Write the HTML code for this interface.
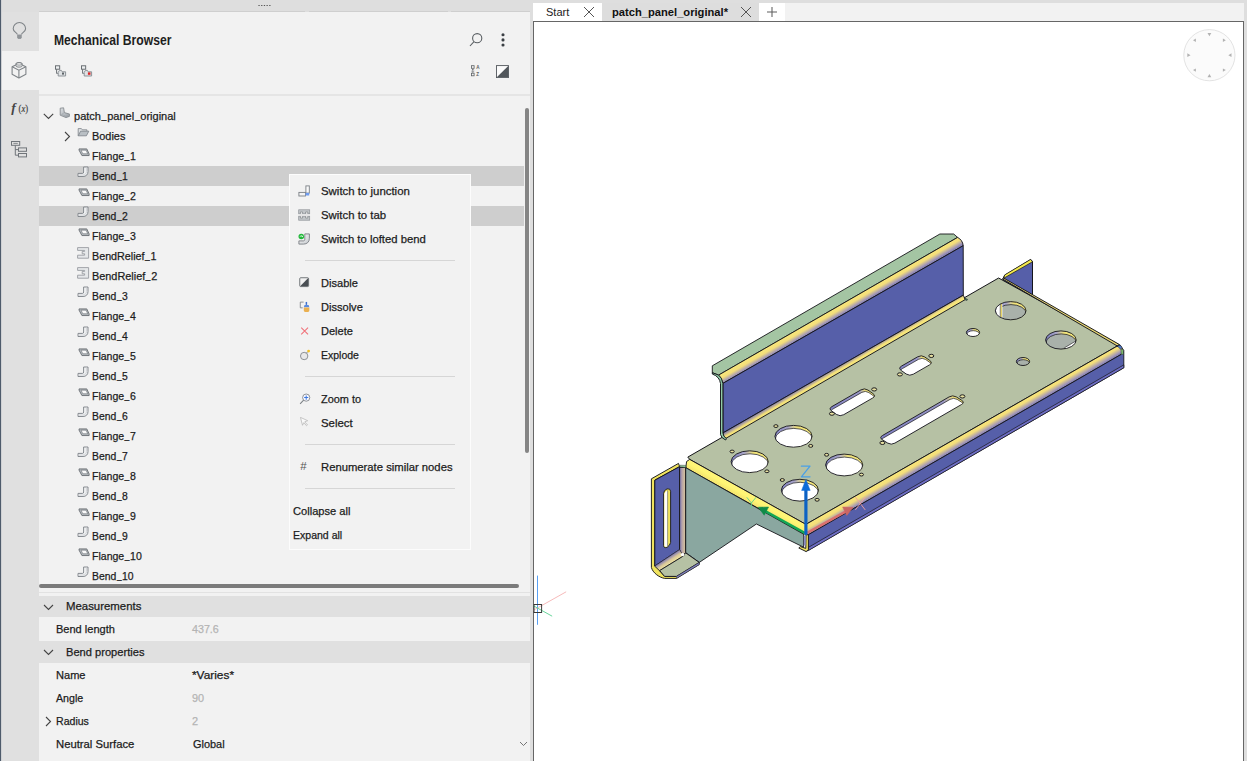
<!DOCTYPE html>
<html><head><meta charset="utf-8"><title>Mechanical Browser</title>
<style>
html,body{margin:0;padding:0;width:1247px;height:761px;overflow:hidden;background:#dedede;font-family:"Liberation Sans",sans-serif;}
.b{position:absolute;display:block;}
.u{display:inline-block;position:relative;top:-1.3px;transform:scaleX(0.8)}
.t{position:absolute;white-space:nowrap;line-height:16px;height:16px;transform-origin:0 50%;font-family:"Liberation Sans",sans-serif;}
</style></head><body>
<div class="b" style="left:0px;top:0px;width:1247px;height:761px;background:#dedede;"></div>
<div class="b" style="left:0px;top:0px;width:1px;height:761px;background:#4e5b6b;"></div>
<div class="b" style="left:1px;top:0px;width:1px;height:761px;background:#cfd1d4;"></div>
<div class="b" style="left:2px;top:12px;width:37px;height:749px;background:#e0e0e0;"></div>
<div class="b" style="left:2px;top:51.3px;width:37px;height:38.7px;background:#f2f2f2;"></div>
<div class="b" style="left:39px;top:12px;width:491px;height:749px;background:#f2f2f2;"></div>
<div class="b" style="left:39px;top:94.4px;width:491px;height:1.3px;background:#e5e5e5;"></div>
<svg class="b" style="left:258px;top:4px" width="14" height="4" viewBox="0 0 14 4"><rect x="0.4" y="1" width="1.3" height="1" fill="#555"/><rect x="3.1" y="1" width="1.3" height="1" fill="#555"/><rect x="5.800000000000001" y="1" width="1.3" height="1" fill="#555"/><rect x="8.500000000000002" y="1" width="1.3" height="1" fill="#555"/><rect x="11.200000000000001" y="1" width="1.3" height="1" fill="#555"/></svg>
<div class="b" style="left:39px;top:11px;width:266px;height:1px;background:#cfcfcf;"></div>
<div class="b" style="left:308.5px;top:11px;width:139px;height:1px;background:#cfcfcf;"></div>
<div class="b" style="left:451.4px;top:11px;width:78.6px;height:1px;background:#cfcfcf;"></div>
<svg class="b" style="left:10px;top:19px" width="20" height="24" viewBox="0 0 20 24"><path d="M7.3 15.5c-.3-1.9-4.1-2.7-4.1-5.8a6.2 6.2 0 0 1 12.4 0c0 3.1-3.8 3.9-4.1 5.8" fill="none" stroke="#7f8488" stroke-width="1.1"/><path d="M7.2 15.4h4.5v3.2l-.8 1.3H8l-.8-1.3z" fill="#969a9e"/><path d="M7.2 16.9h4.5M7.4 18.3h4.1" stroke="#84898d" stroke-width="0.6"/></svg>
<svg class="b" style="left:10px;top:60px" width="20" height="24" viewBox="0 0 20 24"><path d="M8.9 3.4 2.1 6.8v7.5l6.8 3.6 7-3.6V6.8z" fill="none" stroke="#7f8488" stroke-width="1.1" stroke-linejoin="round"/><path d="M2.1 6.8 8.9 10.2l7-3.4M8.9 10.2v7.7" fill="none" stroke="#7f8488" stroke-width="1.1"/><path d="M6 5.9V3.8c0-1.7 6.1-1.7 6.1 0v2.1c0 1.6-6.1 1.6-6.1 0z" fill="#f2f2f2" stroke="#7f8488" stroke-width="1"/><ellipse cx="9.05" cy="3.9" rx="3.05" ry="1.25" fill="none" stroke="#7f8488" stroke-width="0.8"/></svg>
<svg class="b" style="left:8px;top:98px" width="26" height="20" viewBox="0 0 26 20"><text x="3.2" y="14.2" font-family="Liberation Serif" font-style="italic" font-weight="bold" font-size="13.5" fill="#454545">f</text><text x="10.6" y="14.0" font-family="Liberation Serif" font-size="9.4" fill="#3c3c3c" stroke="#3c3c3c" stroke-width="0.15" textLength="9.6" lengthAdjust="spacingAndGlyphs">(<tspan font-style="italic">x</tspan>)</text></svg>
<svg class="b" style="left:11px;top:141px" width="18" height="20" viewBox="0 0 18 20"><rect x="0.5" y="0.5" width="8.2" height="3.8" fill="none" stroke="#70757a" stroke-width="1"/><path d="M2.4 2.4h4.4" stroke="#70757a" stroke-width="0.8"/><rect x="7.5" y="6.9" width="8" height="3.4" fill="none" stroke="#70757a" stroke-width="1"/><rect x="7.5" y="12.5" width="8" height="3.4" fill="none" stroke="#70757a" stroke-width="1"/><path d="M4.3 4.4v9.8h3.2M4.3 8.6h3.2" fill="none" stroke="#70757a" stroke-width="1"/></svg>
<div class="t" style="left:54px;top:32.70px;font-size:13.8px;font-weight:bold;color:#1e1e1e;transform:scaleX(0.880);">Mechanical Browser</div>
<svg class="b" style="left:468px;top:32px" width="16" height="16" viewBox="0 0 16 16"><circle cx="9.2" cy="6.2" r="4.6" fill="none" stroke="#5a5f63" stroke-width="1.1"/><path d="M6 9.6 2 14" stroke="#5a5f63" stroke-width="1.1"/></svg>
<svg class="b" style="left:499.5px;top:32px" width="6" height="16" viewBox="0 0 6 16"><circle cx="3" cy="2.8" r="1.55" fill="#3a3f44"/><circle cx="3" cy="7.8999999999999995" r="1.55" fill="#3a3f44"/><circle cx="3" cy="13.0" r="1.55" fill="#3a3f44"/></svg>
<svg class="b" style="left:54.6px;top:65px" width="13" height="12" viewBox="0 0 13 12"><rect x="0.5" y="0.8" width="4.2" height="3.4" fill="#eef0f1" stroke="#5d6368" stroke-width="0.9"/><path d="M1.6 4.4v4h1.2" fill="none" stroke="#5d6368" stroke-width="0.9"/><path d="M3.2 11V7.4l1.2-2h2l.8 1.4h3.4V11z" fill="#dfe2e4" stroke="#8d9398" stroke-width="1"/><rect x="7" y="7.6" width="2" height="2" fill="#5d6368"/></svg>
<svg class="b" style="left:80.6px;top:65px" width="13" height="12" viewBox="0 0 13 12"><rect x="0.5" y="0.8" width="4.2" height="3.4" fill="#eef0f1" stroke="#5d6368" stroke-width="0.9"/><path d="M1.6 4.4v4h1.2" fill="none" stroke="#5d6368" stroke-width="0.9"/><path d="M3.2 11V7.4l1.2-2h2l.8 1.4h3.4V11z" fill="#dfe2e4" stroke="#8d9398" stroke-width="1"/><rect x="6.9" y="7.4" width="2.6" height="2.4" fill="#e02424"/></svg>
<svg class="b" style="left:471px;top:65px" width="11" height="12" viewBox="0 0 11 12"><rect x="0.5" y="0.7" width="2.6" height="2.6" fill="none" stroke="#5a5f63" stroke-width="0.8"/><rect x="0.5" y="8.2" width="2.6" height="2.6" fill="none" stroke="#5a5f63" stroke-width="0.8"/><path d="M1.8 4.2v3M.8 5.2l1-1 1 1M.8 6.4l1 1 1-1" fill="none" stroke="#5a5f63" stroke-width="0.7"/><text x="5.2" y="3.9" font-family="Liberation Sans" font-size="4.6" fill="#5a5f63" font-weight="bold">A</text><text x="5.2" y="11" font-family="Liberation Sans" font-size="4.6" fill="#5a5f63" font-weight="bold">Z</text></svg>
<svg class="b" style="left:495px;top:64px" width="14" height="14" viewBox="0 0 14 14"><rect x="1.5" y="1.6" width="12" height="12" fill="#fbfbfb" stroke="#51565b" stroke-width="0.9"/><path d="M13.2 1.9v11.4H1.8z" fill="#51565b"/></svg>
<svg class="b" style="left:42.6px;top:113px" width="11" height="7" viewBox="0 0 11 7"><path d="M0.8 0.8l4.7 4.7L10.2 0.8" fill="none" stroke="#444" stroke-width="1.1"/></svg>
<svg class="b" style="left:59px;top:107px" width="12" height="12" viewBox="0 0 12 12"><defs><linearGradient id="rg" x1="0" y1="0" x2="1" y2="1"><stop offset="0" stop-color="#dde0e3"/><stop offset="1" stop-color="#9aa0a6"/></linearGradient></defs><path d="M1.2 1.2 L4.6 0.8 L5.4 5.6 L10.4 7 L10.4 9.4 L7 10.6 L1.2 8.2 Z" fill="url(#rg)" stroke="#7d8388" stroke-width="0.8" stroke-linejoin="round"/><path d="M5.4 5.6 L2.4 7.4 L7 9.2 L10.4 7 M7 9.2V10.6" fill="none" stroke="#9aa0a5" stroke-width="0.6"/></svg>
<div class="t" style="left:74px;top:108.20px;font-size:11.5px;font-weight:normal;color:#1c1c1c;transform:scaleX(0.959);-webkit-text-stroke:0.25px #1c1c1c;">patch<span class=u>_</span>panel<span class=u>_</span>original</div>
<svg class="b" style="left:63.6px;top:131.2px" width="7" height="11" viewBox="0 0 7 11"><path d="M1 1l4.5 4.5L1 10" fill="none" stroke="#444" stroke-width="1.1"/></svg>
<svg class="b" style="left:77px;top:127px" width="13" height="11" viewBox="0 0 13 11"><path d="M1.2 8.8V1.6h3.2l.9 1.2h4.6v1.4" fill="#dfe2e4" stroke="#7a8086" stroke-width="0.8" stroke-linejoin="round"/><path d="M1.2 8.8l2.4-4.6h8.2L9.4 8.8z" fill="#b9bfc4" stroke="#7a8086" stroke-width="0.8" stroke-linejoin="round"/></svg>
<div class="t" style="left:92px;top:128.20px;font-size:11.5px;font-weight:normal;color:#1c1c1c;transform:scaleX(0.950);-webkit-text-stroke:0.25px #1c1c1c;">Bodies</div>
<svg class="b" style="left:77.5px;top:148.20000000000002px" width="12" height="9" viewBox="0 0 13 10"><path d="M1 1h8.6l2.6 5.6v1.8H4.2L1 2.4z" fill="#b8bdc1" stroke="#5c6166" stroke-width="0.9" stroke-linejoin="round"/><path d="M3.2 2.4h5.6l1.8 4H5.2z" fill="#fafafa" stroke="#5c6166" stroke-width="0.6" stroke-linejoin="round"/></svg>
<div class="t" style="left:92px;top:148.20px;font-size:11.5px;font-weight:normal;color:#1c1c1c;transform:scaleX(0.915);-webkit-text-stroke:0.25px #1c1c1c;">Flange<span class=u>_</span>1</div>
<div class="b" style="left:39px;top:166px;width:484.6px;height:20px;background:#cecece;"></div>
<svg class="b" style="left:77px;top:166.2px" width="13" height="12" viewBox="0 0 13 12"><path d="M6.6 1h4.4v4.6c0 3-2 4.9-5 4.9H1V7.4h4.6c.8 0 1-.6 1-1.4z" fill="#f0f1f2" stroke="#7a8086" stroke-width="0.9" stroke-linejoin="round"/><path d="M9.4 1.6v4c0 2-1.2 3.4-3.4 3.4H1.6" fill="none" stroke="#c9cdd0" stroke-width="0.8"/></svg>
<div class="t" style="left:92px;top:168.20px;font-size:11.5px;font-weight:normal;color:#1c1c1c;transform:scaleX(0.900);-webkit-text-stroke:0.25px #1c1c1c;">Bend<span class=u>_</span>1</div>
<svg class="b" style="left:77.5px;top:188.20000000000002px" width="12" height="9" viewBox="0 0 13 10"><path d="M1 1h8.6l2.6 5.6v1.8H4.2L1 2.4z" fill="#b8bdc1" stroke="#5c6166" stroke-width="0.9" stroke-linejoin="round"/><path d="M3.2 2.4h5.6l1.8 4H5.2z" fill="#fafafa" stroke="#5c6166" stroke-width="0.6" stroke-linejoin="round"/></svg>
<div class="t" style="left:92px;top:188.20px;font-size:11.5px;font-weight:normal;color:#1c1c1c;transform:scaleX(0.915);-webkit-text-stroke:0.25px #1c1c1c;">Flange<span class=u>_</span>2</div>
<div class="b" style="left:39px;top:206px;width:484.6px;height:20px;background:#cecece;"></div>
<svg class="b" style="left:77px;top:206.2px" width="13" height="12" viewBox="0 0 13 12"><path d="M6.6 1h4.4v4.6c0 3-2 4.9-5 4.9H1V7.4h4.6c.8 0 1-.6 1-1.4z" fill="#f0f1f2" stroke="#7a8086" stroke-width="0.9" stroke-linejoin="round"/><path d="M9.4 1.6v4c0 2-1.2 3.4-3.4 3.4H1.6" fill="none" stroke="#c9cdd0" stroke-width="0.8"/></svg>
<div class="t" style="left:92px;top:208.20px;font-size:11.5px;font-weight:normal;color:#1c1c1c;transform:scaleX(0.900);-webkit-text-stroke:0.25px #1c1c1c;">Bend<span class=u>_</span>2</div>
<svg class="b" style="left:77.5px;top:228.20000000000002px" width="12" height="9" viewBox="0 0 13 10"><path d="M1 1h8.6l2.6 5.6v1.8H4.2L1 2.4z" fill="#b8bdc1" stroke="#5c6166" stroke-width="0.9" stroke-linejoin="round"/><path d="M3.2 2.4h5.6l1.8 4H5.2z" fill="#fafafa" stroke="#5c6166" stroke-width="0.6" stroke-linejoin="round"/></svg>
<div class="t" style="left:92px;top:228.20px;font-size:11.5px;font-weight:normal;color:#1c1c1c;transform:scaleX(0.915);-webkit-text-stroke:0.25px #1c1c1c;">Flange<span class=u>_</span>3</div>
<svg class="b" style="left:77.3px;top:246.79999999999998px" width="13" height="12" viewBox="0 0 13 12"><path d="M0.6 0.6H11.6V11.2H0.6V8.2H7.6V6.8H5.2V4.4H7.6V3.4H0.6Z" fill="#e6e8ea" stroke="#989ca1" stroke-width="0.9" stroke-linejoin="round"/></svg>
<div class="t" style="left:92px;top:248.20px;font-size:11.5px;font-weight:normal;color:#1c1c1c;transform:scaleX(0.934);-webkit-text-stroke:0.25px #1c1c1c;">BendRelief<span class=u>_</span>1</div>
<svg class="b" style="left:77.3px;top:266.8px" width="13" height="12" viewBox="0 0 13 12"><path d="M0.6 0.6H11.6V11.2H0.6V8.2H7.6V6.8H5.2V4.4H7.6V3.4H0.6Z" fill="#e6e8ea" stroke="#989ca1" stroke-width="0.9" stroke-linejoin="round"/></svg>
<div class="t" style="left:92px;top:268.20px;font-size:11.5px;font-weight:normal;color:#1c1c1c;transform:scaleX(0.946);-webkit-text-stroke:0.25px #1c1c1c;">BendRelief<span class=u>_</span>2</div>
<svg class="b" style="left:77px;top:286.2px" width="13" height="12" viewBox="0 0 13 12"><path d="M6.6 1h4.4v4.6c0 3-2 4.9-5 4.9H1V7.4h4.6c.8 0 1-.6 1-1.4z" fill="#f0f1f2" stroke="#7a8086" stroke-width="0.9" stroke-linejoin="round"/><path d="M9.4 1.6v4c0 2-1.2 3.4-3.4 3.4H1.6" fill="none" stroke="#c9cdd0" stroke-width="0.8"/></svg>
<div class="t" style="left:92px;top:288.20px;font-size:11.5px;font-weight:normal;color:#1c1c1c;transform:scaleX(0.900);-webkit-text-stroke:0.25px #1c1c1c;">Bend<span class=u>_</span>3</div>
<svg class="b" style="left:77.5px;top:308.2px" width="12" height="9" viewBox="0 0 13 10"><path d="M1 1h8.6l2.6 5.6v1.8H4.2L1 2.4z" fill="#b8bdc1" stroke="#5c6166" stroke-width="0.9" stroke-linejoin="round"/><path d="M3.2 2.4h5.6l1.8 4H5.2z" fill="#fafafa" stroke="#5c6166" stroke-width="0.6" stroke-linejoin="round"/></svg>
<div class="t" style="left:92px;top:308.20px;font-size:11.5px;font-weight:normal;color:#1c1c1c;transform:scaleX(0.915);-webkit-text-stroke:0.25px #1c1c1c;">Flange<span class=u>_</span>4</div>
<svg class="b" style="left:77px;top:326.2px" width="13" height="12" viewBox="0 0 13 12"><path d="M6.6 1h4.4v4.6c0 3-2 4.9-5 4.9H1V7.4h4.6c.8 0 1-.6 1-1.4z" fill="#f0f1f2" stroke="#7a8086" stroke-width="0.9" stroke-linejoin="round"/><path d="M9.4 1.6v4c0 2-1.2 3.4-3.4 3.4H1.6" fill="none" stroke="#c9cdd0" stroke-width="0.8"/></svg>
<div class="t" style="left:92px;top:328.20px;font-size:11.5px;font-weight:normal;color:#1c1c1c;transform:scaleX(0.900);-webkit-text-stroke:0.25px #1c1c1c;">Bend<span class=u>_</span>4</div>
<svg class="b" style="left:77.5px;top:348.2px" width="12" height="9" viewBox="0 0 13 10"><path d="M1 1h8.6l2.6 5.6v1.8H4.2L1 2.4z" fill="#b8bdc1" stroke="#5c6166" stroke-width="0.9" stroke-linejoin="round"/><path d="M3.2 2.4h5.6l1.8 4H5.2z" fill="#fafafa" stroke="#5c6166" stroke-width="0.6" stroke-linejoin="round"/></svg>
<div class="t" style="left:92px;top:348.20px;font-size:11.5px;font-weight:normal;color:#1c1c1c;transform:scaleX(0.915);-webkit-text-stroke:0.25px #1c1c1c;">Flange<span class=u>_</span>5</div>
<svg class="b" style="left:77px;top:366.2px" width="13" height="12" viewBox="0 0 13 12"><path d="M6.6 1h4.4v4.6c0 3-2 4.9-5 4.9H1V7.4h4.6c.8 0 1-.6 1-1.4z" fill="#f0f1f2" stroke="#7a8086" stroke-width="0.9" stroke-linejoin="round"/><path d="M9.4 1.6v4c0 2-1.2 3.4-3.4 3.4H1.6" fill="none" stroke="#c9cdd0" stroke-width="0.8"/></svg>
<div class="t" style="left:92px;top:368.20px;font-size:11.5px;font-weight:normal;color:#1c1c1c;transform:scaleX(0.900);-webkit-text-stroke:0.25px #1c1c1c;">Bend<span class=u>_</span>5</div>
<svg class="b" style="left:77.5px;top:388.2px" width="12" height="9" viewBox="0 0 13 10"><path d="M1 1h8.6l2.6 5.6v1.8H4.2L1 2.4z" fill="#b8bdc1" stroke="#5c6166" stroke-width="0.9" stroke-linejoin="round"/><path d="M3.2 2.4h5.6l1.8 4H5.2z" fill="#fafafa" stroke="#5c6166" stroke-width="0.6" stroke-linejoin="round"/></svg>
<div class="t" style="left:92px;top:388.20px;font-size:11.5px;font-weight:normal;color:#1c1c1c;transform:scaleX(0.915);-webkit-text-stroke:0.25px #1c1c1c;">Flange<span class=u>_</span>6</div>
<svg class="b" style="left:77px;top:406.2px" width="13" height="12" viewBox="0 0 13 12"><path d="M6.6 1h4.4v4.6c0 3-2 4.9-5 4.9H1V7.4h4.6c.8 0 1-.6 1-1.4z" fill="#f0f1f2" stroke="#7a8086" stroke-width="0.9" stroke-linejoin="round"/><path d="M9.4 1.6v4c0 2-1.2 3.4-3.4 3.4H1.6" fill="none" stroke="#c9cdd0" stroke-width="0.8"/></svg>
<div class="t" style="left:92px;top:408.20px;font-size:11.5px;font-weight:normal;color:#1c1c1c;transform:scaleX(0.900);-webkit-text-stroke:0.25px #1c1c1c;">Bend<span class=u>_</span>6</div>
<svg class="b" style="left:77.5px;top:428.2px" width="12" height="9" viewBox="0 0 13 10"><path d="M1 1h8.6l2.6 5.6v1.8H4.2L1 2.4z" fill="#b8bdc1" stroke="#5c6166" stroke-width="0.9" stroke-linejoin="round"/><path d="M3.2 2.4h5.6l1.8 4H5.2z" fill="#fafafa" stroke="#5c6166" stroke-width="0.6" stroke-linejoin="round"/></svg>
<div class="t" style="left:92px;top:428.20px;font-size:11.5px;font-weight:normal;color:#1c1c1c;transform:scaleX(0.915);-webkit-text-stroke:0.25px #1c1c1c;">Flange<span class=u>_</span>7</div>
<svg class="b" style="left:77px;top:446.2px" width="13" height="12" viewBox="0 0 13 12"><path d="M6.6 1h4.4v4.6c0 3-2 4.9-5 4.9H1V7.4h4.6c.8 0 1-.6 1-1.4z" fill="#f0f1f2" stroke="#7a8086" stroke-width="0.9" stroke-linejoin="round"/><path d="M9.4 1.6v4c0 2-1.2 3.4-3.4 3.4H1.6" fill="none" stroke="#c9cdd0" stroke-width="0.8"/></svg>
<div class="t" style="left:92px;top:448.20px;font-size:11.5px;font-weight:normal;color:#1c1c1c;transform:scaleX(0.900);-webkit-text-stroke:0.25px #1c1c1c;">Bend<span class=u>_</span>7</div>
<svg class="b" style="left:77.5px;top:468.2px" width="12" height="9" viewBox="0 0 13 10"><path d="M1 1h8.6l2.6 5.6v1.8H4.2L1 2.4z" fill="#b8bdc1" stroke="#5c6166" stroke-width="0.9" stroke-linejoin="round"/><path d="M3.2 2.4h5.6l1.8 4H5.2z" fill="#fafafa" stroke="#5c6166" stroke-width="0.6" stroke-linejoin="round"/></svg>
<div class="t" style="left:92px;top:468.20px;font-size:11.5px;font-weight:normal;color:#1c1c1c;transform:scaleX(0.915);-webkit-text-stroke:0.25px #1c1c1c;">Flange<span class=u>_</span>8</div>
<svg class="b" style="left:77px;top:486.2px" width="13" height="12" viewBox="0 0 13 12"><path d="M6.6 1h4.4v4.6c0 3-2 4.9-5 4.9H1V7.4h4.6c.8 0 1-.6 1-1.4z" fill="#f0f1f2" stroke="#7a8086" stroke-width="0.9" stroke-linejoin="round"/><path d="M9.4 1.6v4c0 2-1.2 3.4-3.4 3.4H1.6" fill="none" stroke="#c9cdd0" stroke-width="0.8"/></svg>
<div class="t" style="left:92px;top:488.20px;font-size:11.5px;font-weight:normal;color:#1c1c1c;transform:scaleX(0.900);-webkit-text-stroke:0.25px #1c1c1c;">Bend<span class=u>_</span>8</div>
<svg class="b" style="left:77.5px;top:508.2px" width="12" height="9" viewBox="0 0 13 10"><path d="M1 1h8.6l2.6 5.6v1.8H4.2L1 2.4z" fill="#b8bdc1" stroke="#5c6166" stroke-width="0.9" stroke-linejoin="round"/><path d="M3.2 2.4h5.6l1.8 4H5.2z" fill="#fafafa" stroke="#5c6166" stroke-width="0.6" stroke-linejoin="round"/></svg>
<div class="t" style="left:92px;top:508.20px;font-size:11.5px;font-weight:normal;color:#1c1c1c;transform:scaleX(0.915);-webkit-text-stroke:0.25px #1c1c1c;">Flange<span class=u>_</span>9</div>
<svg class="b" style="left:77px;top:526.2px" width="13" height="12" viewBox="0 0 13 12"><path d="M6.6 1h4.4v4.6c0 3-2 4.9-5 4.9H1V7.4h4.6c.8 0 1-.6 1-1.4z" fill="#f0f1f2" stroke="#7a8086" stroke-width="0.9" stroke-linejoin="round"/><path d="M9.4 1.6v4c0 2-1.2 3.4-3.4 3.4H1.6" fill="none" stroke="#c9cdd0" stroke-width="0.8"/></svg>
<div class="t" style="left:92px;top:528.20px;font-size:11.5px;font-weight:normal;color:#1c1c1c;transform:scaleX(0.900);-webkit-text-stroke:0.25px #1c1c1c;">Bend<span class=u>_</span>9</div>
<svg class="b" style="left:77.5px;top:548.1999999999999px" width="12" height="9" viewBox="0 0 13 10"><path d="M1 1h8.6l2.6 5.6v1.8H4.2L1 2.4z" fill="#b8bdc1" stroke="#5c6166" stroke-width="0.9" stroke-linejoin="round"/><path d="M3.2 2.4h5.6l1.8 4H5.2z" fill="#fafafa" stroke="#5c6166" stroke-width="0.6" stroke-linejoin="round"/></svg>
<div class="t" style="left:92px;top:548.20px;font-size:11.5px;font-weight:normal;color:#1c1c1c;transform:scaleX(0.916);-webkit-text-stroke:0.25px #1c1c1c;">Flange<span class=u>_</span>10</div>
<svg class="b" style="left:77px;top:566.2px" width="13" height="12" viewBox="0 0 13 12"><path d="M6.6 1h4.4v4.6c0 3-2 4.9-5 4.9H1V7.4h4.6c.8 0 1-.6 1-1.4z" fill="#f0f1f2" stroke="#7a8086" stroke-width="0.9" stroke-linejoin="round"/><path d="M9.4 1.6v4c0 2-1.2 3.4-3.4 3.4H1.6" fill="none" stroke="#c9cdd0" stroke-width="0.8"/></svg>
<div class="t" style="left:92px;top:568.20px;font-size:11.5px;font-weight:normal;color:#1c1c1c;transform:scaleX(0.903);-webkit-text-stroke:0.25px #1c1c1c;">Bend<span class=u>_</span>10</div>
<div class="b" style="left:39px;top:583px;width:491px;height:11px;background:#f2f2f2;"></div>
<div class="b" style="left:39px;top:584px;width:480px;height:4px;background:#7b7b7b;border-radius:2px"></div>
<div class="b" style="left:39px;top:591.6px;width:491px;height:1px;background:#e2e2e2;"></div>
<div class="b" style="left:524.7px;top:107.5px;width:4.6px;height:345.5px;background:#858585;border-radius:2.3px"></div>
<div class="b" style="left:39px;top:595.8px;width:491px;height:21.2px;background:#e0e0e0;"></div>
<svg class="b" style="left:42.6px;top:603.6px" width="11" height="7" viewBox="0 0 11 7"><path d="M1 1l4.5 4.5L10 1" fill="none" stroke="#444" stroke-width="1.1"/></svg>
<div class="t" style="left:66px;top:598.40px;font-size:11.5px;font-weight:normal;color:#1c1c1c;transform:scaleX(0.991);-webkit-text-stroke:0.25px #1c1c1c;">Measurements</div>
<div class="t" style="left:56px;top:620.70px;font-size:11.5px;font-weight:normal;color:#1c1c1c;transform:scaleX(0.959);-webkit-text-stroke:0.25px #1c1c1c;">Bend length</div>
<div class="t" style="left:192px;top:620.70px;font-size:11.5px;font-weight:normal;color:#b4b4b4;transform:scaleX(0.931);-webkit-text-stroke:0.25px #b4b4b4;">437.6</div>
<div class="b" style="left:39px;top:641.4px;width:491px;height:21.4px;background:#e0e0e0;"></div>
<svg class="b" style="left:42.6px;top:649.4px" width="11" height="7" viewBox="0 0 11 7"><path d="M1 1l4.5 4.5L10 1" fill="none" stroke="#444" stroke-width="1.1"/></svg>
<div class="t" style="left:66px;top:644.00px;font-size:11.5px;font-weight:normal;color:#1c1c1c;transform:scaleX(0.966);-webkit-text-stroke:0.25px #1c1c1c;">Bend properties</div>
<div class="t" style="left:56px;top:666.70px;font-size:11.5px;font-weight:normal;color:#1c1c1c;transform:scaleX(0.962);-webkit-text-stroke:0.25px #1c1c1c;">Name</div>
<div class="t" style="left:192px;top:666.70px;font-size:11.5px;font-weight:normal;color:#1c1c1c;transform:scaleX(1.032);-webkit-text-stroke:0.25px #1c1c1c;">*Varies*</div>
<div class="t" style="left:56px;top:689.70px;font-size:11.5px;font-weight:normal;color:#1c1c1c;transform:scaleX(0.928);-webkit-text-stroke:0.25px #1c1c1c;">Angle</div>
<div class="t" style="left:192px;top:689.70px;font-size:11.5px;font-weight:normal;color:#b4b4b4;transform:scaleX(0.946);-webkit-text-stroke:0.25px #b4b4b4;">90</div>
<svg class="b" style="left:45px;top:716px" width="7" height="11" viewBox="0 0 7 11"><path d="M1 1l4.5 4.5L1 10" fill="none" stroke="#444" stroke-width="1.1"/></svg>
<div class="t" style="left:56px;top:712.70px;font-size:11.5px;font-weight:normal;color:#1c1c1c;transform:scaleX(0.919);-webkit-text-stroke:0.25px #1c1c1c;">Radius</div>
<div class="t" style="left:192px;top:712.70px;font-size:11.5px;font-weight:normal;color:#b4b4b4;transform:scaleX(0.954);-webkit-text-stroke:0.25px #b4b4b4;">2</div>
<div class="t" style="left:56px;top:735.70px;font-size:11.5px;font-weight:normal;color:#1c1c1c;transform:scaleX(0.981);-webkit-text-stroke:0.25px #1c1c1c;">Neutral Surface</div>
<div class="t" style="left:193px;top:735.70px;font-size:11.5px;font-weight:normal;color:#1c1c1c;transform:scaleX(0.951);-webkit-text-stroke:0.25px #1c1c1c;">Global</div>
<svg class="b" style="left:519px;top:741px" width="9" height="6" viewBox="0 0 9 6"><path d="M1 1l3.5 3.5L8 1" fill="none" stroke="#666" stroke-width="0.9"/></svg>
<div class="b" style="left:290px;top:175px;width:180px;height:374px;background:#f2f2f2;box-shadow:0 0 0 1px #fcfcfc"></div>
<svg class="b" style="left:298.4px;top:184.5px" width="13" height="13" viewBox="0 0 13 13"><rect x="7.9" y="0.9" width="3.4" height="7.2" fill="#fafafa" stroke="#7a7f84" stroke-width="0.9"/><rect x="0.9" y="7.4" width="6.6" height="3.6" fill="#f4f4f4" stroke="#7a7f84" stroke-width="0.9"/><rect x="7.6" y="7.9" width="3.6" height="2.6" fill="#6f9cf0"/></svg>
<div class="t" style="left:321px;top:183.20px;font-size:11.5px;font-weight:normal;color:#1c1c1c;transform:scaleX(0.993);-webkit-text-stroke:0.25px #1c1c1c;">Switch to junction</div>
<svg class="b" style="left:298.4px;top:208.5px" width="13" height="13" viewBox="0 0 13 13"><rect x="0.7" y="0.8" width="11" height="4" fill="#c2c6c9" stroke="#8d9297" stroke-width="0.7"/><rect x="0.7" y="7.2" width="11" height="4" fill="#c2c6c9" stroke="#8d9297" stroke-width="0.7"/><path d="M2.4 4.8V3h2.2v1.8M7.6 4.8V3h2.2v1.8M2.4 7.2V9h2.2V7.2M7.6 7.2V9h2.2V7.2" fill="#f6f6f6" stroke="#6d7277" stroke-width="0.6"/></svg>
<div class="t" style="left:321px;top:207.20px;font-size:11.5px;font-weight:normal;color:#1c1c1c;transform:scaleX(0.990);-webkit-text-stroke:0.25px #1c1c1c;">Switch to tab</div>
<svg class="b" style="left:298.4px;top:232.5px" width="13" height="13" viewBox="0 0 13 13"><defs><linearGradient id="lg1" x1="0" y1="0" x2="1" y2="1"><stop offset="0" stop-color="#f6f6f6"/><stop offset="1" stop-color="#c8ccd0"/></linearGradient></defs><path d="M6.8 0.9h4.6v4.4c0 3.6-2.4 5.8-5.8 5.8H0.9V7.9h4.4c1 0 1.5-.7 1.5-1.8z" fill="url(#lg1)" stroke="#7a7f84" stroke-width="0.9" stroke-linejoin="round"/><circle cx="3.3" cy="3.5" r="2.8" fill="#22b83a"/><path d="M2.1 3.9c0-1.6 2.4-1.6 2.4-.2M4.5 3.7l.5-1M4.5 3.7l-1-.3" stroke="#fff" stroke-width="0.7" fill="none"/></svg>
<div class="t" style="left:321px;top:231.20px;font-size:11.5px;font-weight:normal;color:#1c1c1c;transform:scaleX(0.981);-webkit-text-stroke:0.25px #1c1c1c;">Switch to lofted bend</div>
<div class="b" style="left:305px;top:260px;width:150px;height:1px;background:#d6d6d6;"></div>
<svg class="b" style="left:299.0px;top:277.40000000000003px" width="12" height="12" viewBox="0 0 13 13"><rect x="0.8" y="0.8" width="9.6" height="9.6" rx="1" fill="#f2f2f2" stroke="#5a5f63" stroke-width="0.9"/><path d="M10 1.2v8.8H1.2z" fill="#4a4f54"/></svg>
<div class="t" style="left:321px;top:275.20px;font-size:11.5px;font-weight:normal;color:#1c1c1c;transform:scaleX(0.962);-webkit-text-stroke:0.25px #1c1c1c;">Disable</div>
<svg class="b" style="left:298.6px;top:300.6px" width="12" height="12" viewBox="0 0 13 13"><path d="M5 1.2H1.4v6.2H4" fill="none" stroke="#7a7f84" stroke-width="0.9"/><path d="M8 1v3.2" stroke="#3a6fd0" stroke-width="1.6"/><path d="M6 4.4h4.4l.8 2.4H5.2z" fill="#5a8ae0"/><path d="M5.2 7h6v3.2c0 1-1 1.8-3 1.8s-3-.8-3-1.8z" fill="#eab050"/></svg>
<div class="t" style="left:321px;top:299.20px;font-size:11.5px;font-weight:normal;color:#1c1c1c;transform:scaleX(0.962);-webkit-text-stroke:0.25px #1c1c1c;">Dissolve</div>
<svg class="b" style="left:298.6px;top:324.6px" width="12" height="12" viewBox="0 0 13 13"><path d="M2.4 2.8l7.4 7.4M9.8 2.8l-7.4 7.4" stroke="#f07078" stroke-width="1.1"/></svg>
<div class="t" style="left:321px;top:323.20px;font-size:11.5px;font-weight:normal;color:#1c1c1c;transform:scaleX(0.960);-webkit-text-stroke:0.25px #1c1c1c;">Delete</div>
<svg class="b" style="left:298.6px;top:348.6px" width="12" height="12" viewBox="0 0 13 13"><circle cx="5.6" cy="7.6" r="4" fill="#e8e8e8" stroke="#7a7f84" stroke-width="0.9"/><path d="M8 4.6l1.8-2" stroke="#7a7f84" stroke-width="0.9"/><circle cx="10.4" cy="2.2" r="1.5" fill="#f4c020"/></svg>
<div class="t" style="left:321px;top:347.20px;font-size:11.5px;font-weight:normal;color:#1c1c1c;transform:scaleX(0.912);-webkit-text-stroke:0.25px #1c1c1c;">Explode</div>
<div class="b" style="left:305px;top:376px;width:150px;height:1px;background:#d6d6d6;"></div>
<svg class="b" style="left:298.6px;top:392.6px" width="12" height="12" viewBox="0 0 13 13"><circle cx="7.8" cy="5" r="3.9" fill="#f8f8ff" stroke="#7a7f84" stroke-width="0.9"/><path d="M5 7.8 1.2 11.8" stroke="#7a7f84" stroke-width="1.1"/><path d="M7.8 2.8v4.4M5.6 5h4.4" stroke="#3a78e0" stroke-width="1.1"/></svg>
<div class="t" style="left:321px;top:391.20px;font-size:11.5px;font-weight:normal;color:#1c1c1c;transform:scaleX(0.948);-webkit-text-stroke:0.25px #1c1c1c;">Zoom to</div>
<svg class="b" style="left:298.6px;top:416.6px" width="12" height="12" viewBox="0 0 13 13"><path d="M1.6 0.4l7.8 3.6-3.2 1.2 3 3.4-1 .9-3-3.4-1.4 2.9z" fill="#fafafa" stroke="#b4b4b4" stroke-width="0.8" stroke-linejoin="round"/></svg>
<div class="t" style="left:321px;top:415.20px;font-size:11.5px;font-weight:normal;color:#1c1c1c;transform:scaleX(0.989);-webkit-text-stroke:0.25px #1c1c1c;">Select</div>
<div class="b" style="left:305px;top:444px;width:150px;height:1px;background:#d6d6d6;"></div>
<div class="t" style="left:300.20000000000005px;top:457.6px;font-size:11.5px;color:#555">#</div>
<div class="t" style="left:321px;top:459.20px;font-size:11.5px;font-weight:normal;color:#1c1c1c;transform:scaleX(0.980);-webkit-text-stroke:0.25px #1c1c1c;">Renumerate similar nodes</div>
<div class="b" style="left:305px;top:488px;width:150px;height:1px;background:#d6d6d6;"></div>
<div class="t" style="left:293px;top:503.20px;font-size:11.5px;font-weight:normal;color:#1c1c1c;transform:scaleX(0.966);-webkit-text-stroke:0.25px #1c1c1c;">Collapse all</div>
<div class="t" style="left:293px;top:527.20px;font-size:11.5px;font-weight:normal;color:#1c1c1c;transform:scaleX(0.916);-webkit-text-stroke:0.25px #1c1c1c;">Expand all</div>
<div class="b" style="left:533px;top:3px;width:711px;height:18px;background:#f2f2f2;"></div>
<div class="b" style="left:533px;top:3px;width:69px;height:18px;background:#ffffff;"></div>
<div class="b" style="left:602px;top:3px;width:157.4px;height:18px;background:#dddddd;"></div>
<div class="b" style="left:759.4px;top:3px;width:25.6px;height:18px;background:#ffffff;"></div>
<div class="t" style="left:546px;top:3.50px;font-size:11px;font-weight:normal;color:#222;transform:scaleX(1.000);">Start</div>
<svg class="b" style="left:583.4px;top:6px" width="12" height="12" viewBox="0 0 12 12"><path d="M1 1l10 10M11 1L1 11" stroke="#555" stroke-width="1"/></svg>
<div class="t" style="left:612px;top:3.50px;font-size:11px;font-weight:bold;color:#111;transform:scaleX(1.015);">patch_panel_original*</div>
<svg class="b" style="left:740px;top:6px" width="12" height="12" viewBox="0 0 12 12"><path d="M1 1l10 10M11 1L1 11" stroke="#555" stroke-width="1"/></svg>
<svg class="b" style="left:766px;top:6px" width="12" height="12" viewBox="0 0 12 12"><path d="M6 1v10M1 6h10" stroke="#5e5e5e" stroke-width="1.05"/></svg>
<div class="b" style="left:533px;top:21px;width:711px;height:740px;background:#ffffff;box-shadow:inset 1px 1px 0 #666, inset -1px 0 0 #666"></div>
<svg class="b" style="left:0;top:0" width="1247" height="761" viewBox="0 0 1247 761"><defs><linearGradient id="g1" gradientUnits="userSpaceOnUse" x1="718.6" y1="375.1" x2="723.3" y2="383.2"><stop offset="0" stop-color="#f8e87c"/><stop offset="0.45" stop-color="#f4de7a"/><stop offset="0.85" stop-color="#a79bb4"/><stop offset="1" stop-color="#8a84b4"/></linearGradient><linearGradient id="g2" gradientUnits="userSpaceOnUse" x1="723.0" y1="432.9" x2="726.1" y2="438.2"><stop offset="0" stop-color="#6a6cae"/><stop offset="0.35" stop-color="#b5a79a"/><stop offset="0.7" stop-color="#f3e07a"/><stop offset="1" stop-color="#f7e87c"/></linearGradient><clipPath id="c3"><ellipse cx="793.5" cy="436.3" rx="18.6" ry="10.9"/></clipPath><linearGradient id="g4" gradientUnits="userSpaceOnUse" x1="774.9" y1="436.3" x2="812.1" y2="436.3"><stop offset="0" stop-color="#7d7fc0"/><stop offset="0.35" stop-color="#a9a6c8"/><stop offset="0.6" stop-color="#f1e37a"/><stop offset="1" stop-color="#f5e97c"/></linearGradient><clipPath id="c5"><ellipse cx="749.7" cy="461.7" rx="18.6" ry="10.9"/></clipPath><linearGradient id="g6" gradientUnits="userSpaceOnUse" x1="731.1" y1="461.7" x2="768.3" y2="461.7"><stop offset="0" stop-color="#7d7fc0"/><stop offset="0.35" stop-color="#a9a6c8"/><stop offset="0.6" stop-color="#f1e37a"/><stop offset="1" stop-color="#f5e97c"/></linearGradient><clipPath id="c7"><ellipse cx="844.2" cy="465.0" rx="18.6" ry="10.9"/></clipPath><linearGradient id="g8" gradientUnits="userSpaceOnUse" x1="825.6" y1="465.0" x2="862.8" y2="465.0"><stop offset="0" stop-color="#7d7fc0"/><stop offset="0.35" stop-color="#a9a6c8"/><stop offset="0.6" stop-color="#f1e37a"/><stop offset="1" stop-color="#f5e97c"/></linearGradient><clipPath id="c9"><ellipse cx="799.9" cy="490.2" rx="18.6" ry="10.9"/></clipPath><linearGradient id="g10" gradientUnits="userSpaceOnUse" x1="781.3" y1="490.2" x2="818.5" y2="490.2"><stop offset="0" stop-color="#7d7fc0"/><stop offset="0.35" stop-color="#a9a6c8"/><stop offset="0.6" stop-color="#f1e37a"/><stop offset="1" stop-color="#f5e97c"/></linearGradient><clipPath id="c11"><ellipse cx="1010.7" cy="310.7" rx="15.3" ry="9.1"/></clipPath><linearGradient id="g12" gradientUnits="userSpaceOnUse" x1="995.4" y1="310.7" x2="1026.0" y2="310.7"><stop offset="0" stop-color="#7d7fc0"/><stop offset="0.35" stop-color="#a9a6c8"/><stop offset="0.6" stop-color="#f1e37a"/><stop offset="1" stop-color="#f5e97c"/></linearGradient><clipPath id="c13"><ellipse cx="1060.9" cy="340.0" rx="15.3" ry="9.1"/></clipPath><linearGradient id="g14" gradientUnits="userSpaceOnUse" x1="1045.6" y1="340.0" x2="1076.2" y2="340.0"><stop offset="0" stop-color="#7d7fc0"/><stop offset="0.35" stop-color="#a9a6c8"/><stop offset="0.6" stop-color="#f1e37a"/><stop offset="1" stop-color="#f5e97c"/></linearGradient><clipPath id="c15"><ellipse cx="973.0" cy="332.5" rx="6.6" ry="4.0"/></clipPath><linearGradient id="g16" gradientUnits="userSpaceOnUse" x1="966.4" y1="332.5" x2="979.6" y2="332.5"><stop offset="0" stop-color="#7d7fc0"/><stop offset="0.35" stop-color="#a9a6c8"/><stop offset="0.6" stop-color="#f1e37a"/><stop offset="1" stop-color="#f5e97c"/></linearGradient><clipPath id="c17"><ellipse cx="1023.0" cy="361.5" rx="6.6" ry="4.0"/></clipPath><linearGradient id="g18" gradientUnits="userSpaceOnUse" x1="1016.4" y1="361.5" x2="1029.6" y2="361.5"><stop offset="0" stop-color="#7d7fc0"/><stop offset="0.35" stop-color="#a9a6c8"/><stop offset="0.6" stop-color="#f1e37a"/><stop offset="1" stop-color="#f5e97c"/></linearGradient><clipPath id="c19"><path d="M901.4,370.6 Q897.9,368.2 901.5,366.1 L917.7,356.8 Q921.3,354.7 924.8,357.0 L929.6,360.4 Q933.1,362.8 929.5,364.9 L913.3,374.2 Q909.7,376.3 906.2,374.0 Z"/></clipPath><linearGradient id="g20" gradientUnits="userSpaceOnUse" x1="897.9" y1="368.2" x2="933.1" y2="362.8"><stop offset="0" stop-color="#7f80c2"/><stop offset="0.5878409460188379" stop-color="#9a98c6"/><stop offset="0.7078409460188378" stop-color="#efe07a"/><stop offset="1" stop-color="#f5e97c"/></linearGradient><clipPath id="c21"><path d="M831.8,411.1 Q828.3,408.7 831.9,406.6 L860.9,389.9 Q864.5,387.8 868.0,390.1 L872.8,393.5 Q876.3,395.9 872.7,398.0 L843.7,414.7 Q840.1,416.8 836.6,414.5 Z"/></clipPath><linearGradient id="g22" gradientUnits="userSpaceOnUse" x1="828.3" y1="408.7" x2="876.3" y2="395.9"><stop offset="0" stop-color="#7f80c2"/><stop offset="0.6930089526332286" stop-color="#9a98c6"/><stop offset="0.8130089526332286" stop-color="#efe07a"/><stop offset="1" stop-color="#f5e97c"/></linearGradient><clipPath id="c23"><path d="M882.5,439.8 Q878.9,437.6 882.5,435.5 L949.1,396.9 Q952.7,394.8 956.3,396.9 L961.5,400.2 Q965.1,402.4 961.5,404.5 L894.9,443.1 Q891.3,445.2 887.7,443.1 Z"/></clipPath><linearGradient id="g24" gradientUnits="userSpaceOnUse" x1="878.9" y1="437.6" x2="965.1" y2="402.4"><stop offset="0" stop-color="#7f80c2"/><stop offset="0.787718578770095" stop-color="#9a98c6"/><stop offset="0.907718578770095" stop-color="#efe07a"/><stop offset="1" stop-color="#f5e97c"/></linearGradient><linearGradient id="g25" gradientUnits="userSpaceOnUse" x1="689.7" y1="459.4" x2="686.0" y2="466.0"><stop offset="0" stop-color="#fdf27a"/><stop offset="0.5" stop-color="#fff674"/><stop offset="1" stop-color="#f6e870"/></linearGradient><linearGradient id="g26" gradientUnits="userSpaceOnUse" x1="805.9" y1="524.4" x2="811.0" y2="533.2"><stop offset="0" stop-color="#f8e87c"/><stop offset="0.42" stop-color="#f4de7a"/><stop offset="0.82" stop-color="#a79bb4"/><stop offset="1" stop-color="#8580b4"/></linearGradient><linearGradient id="g27" gradientUnits="userSpaceOnUse" x1="679.6" y1="0.0" x2="685.6" y2="0.0"><stop offset="0" stop-color="#7d78b4"/><stop offset="0.45" stop-color="#b9a6a6"/><stop offset="1" stop-color="#d9c79a"/></linearGradient><linearGradient id="g28" gradientUnits="userSpaceOnUse" x1="654.8" y1="566.0" x2="658.6" y2="571.8"><stop offset="0" stop-color="#7d78b4"/><stop offset="0.5" stop-color="#d9c79a"/><stop offset="1" stop-color="#f1e6a0"/></linearGradient></defs>
<polygon points="1002.8,279.2 1004.6,275.2 1030.6,259.6 1032.5,261.2 1032.5,296.0 1004.0,281.0" fill="#565fa9" stroke="#15151a" stroke-width="1.0" stroke-linejoin="round" />
<polygon points="1003.8,278.2 1004.6,275.0 1030.6,259.4 1032.5,261.8" fill="#f4ea4e" stroke="#15151a" stroke-width="0.7" stroke-linejoin="round" />
<polygon points="687.8,457.1 998.6,278.0 1120.4,345.6 1116.1,346.7 805.9,524.4 689.7,459.4" fill="#b6c1a4" stroke="#15151a" stroke-width="1.0" stroke-linejoin="round" />
<polygon points="1002.6,279.0 1003.6,278.0 1119.5,344.6 1117.0,345.8" fill="#e9d873" stroke="#15151a" stroke-width="0.95" stroke-linejoin="round" />
<path d="M712.3,365.8 L939.9,234.0 L953.7,234.0 L957.6,237.4 L718.6,375.1 L712.3,372.7 Z" fill="#a4c5a3" stroke="#15151a" stroke-width="0.9" stroke-linejoin="round"/>
<path d="M718.6,375.1 L957.6,237.4 Q962.6,240.0 963.2,245.7 L722.9,383.4 Q721.6,378.0 718.6,375.1 Z" fill="url(#g1)" stroke="#15151a" stroke-width="0.95"/>
<polygon points="722.9,383.4 963.2,245.7 963.3,295.2 723.0,432.9" fill="#565fa9" stroke="#15151a" stroke-width="0.95" stroke-linejoin="round" />
<polygon points="723.0,432.9 963.3,295.2 965.2,299.6 725.8,438.4 723.4,436.0" fill="url(#g2)" stroke="#15151a" stroke-width="0.95" stroke-linejoin="round" />
<path d="M712.3,372.7 L712.3,374.0 Q719.6,376.6 720.5,383.5 L720.5,434.6 Q721.4,438.2 725.6,440.0 L726.4,438.6 Q723.2,436.6 722.9,432.9 L722.9,383.4 Q722.0,377.4 718.6,375.1 Z" fill="#8fcaa6" stroke="#15151a" stroke-width="0.95" stroke-linejoin="round"/>
<polygon points="964.6,298.0 967.6,299.4 967.0,300.4 965.0,299.8" fill="#4f8f7a" stroke="#15151a" stroke-width="0.5" stroke-linejoin="round" />
<ellipse cx="793.5" cy="436.3" rx="18.6" ry="10.9" fill="url(#g4)"/><g clip-path="url(#c3)"><ellipse cx="793.8" cy="439.3" rx="18.6" ry="10.9" fill="#ffffff" stroke="#15151a" stroke-width="0.7"/></g><ellipse cx="793.5" cy="436.3" rx="18.6" ry="10.9" fill="none" stroke="#15151a" stroke-width="0.9"/>
<ellipse cx="775.9" cy="426.1" rx="2.1" ry="1.4" fill="#e8e1a0" stroke="#15151a" stroke-width="0.95"/>
<ellipse cx="810.7" cy="445.9" rx="2.1" ry="1.4" fill="#e8e1a0" stroke="#15151a" stroke-width="0.95"/>
<ellipse cx="749.7" cy="461.7" rx="18.6" ry="10.9" fill="url(#g6)"/><g clip-path="url(#c5)"><ellipse cx="750.0" cy="464.7" rx="18.6" ry="10.9" fill="#ffffff" stroke="#15151a" stroke-width="0.7"/></g><ellipse cx="749.7" cy="461.7" rx="18.6" ry="10.9" fill="none" stroke="#15151a" stroke-width="0.9"/>
<ellipse cx="732.1" cy="451.5" rx="2.1" ry="1.4" fill="#e8e1a0" stroke="#15151a" stroke-width="0.95"/>
<ellipse cx="766.9" cy="471.3" rx="2.1" ry="1.4" fill="#e8e1a0" stroke="#15151a" stroke-width="0.95"/>
<ellipse cx="844.2" cy="465.0" rx="18.6" ry="10.9" fill="url(#g8)"/><g clip-path="url(#c7)"><ellipse cx="844.5" cy="468.0" rx="18.6" ry="10.9" fill="#ffffff" stroke="#15151a" stroke-width="0.7"/></g><ellipse cx="844.2" cy="465.0" rx="18.6" ry="10.9" fill="none" stroke="#15151a" stroke-width="0.9"/>
<ellipse cx="826.6" cy="454.8" rx="2.1" ry="1.4" fill="#e8e1a0" stroke="#15151a" stroke-width="0.95"/>
<ellipse cx="861.4" cy="474.6" rx="2.1" ry="1.4" fill="#e8e1a0" stroke="#15151a" stroke-width="0.95"/>
<ellipse cx="799.9" cy="490.2" rx="18.6" ry="10.9" fill="url(#g10)"/><g clip-path="url(#c9)"><ellipse cx="800.1999999999999" cy="493.2" rx="18.6" ry="10.9" fill="#ffffff" stroke="#15151a" stroke-width="0.7"/></g><ellipse cx="799.9" cy="490.2" rx="18.6" ry="10.9" fill="none" stroke="#15151a" stroke-width="0.9"/>
<ellipse cx="782.3" cy="480.0" rx="2.1" ry="1.4" fill="#e8e1a0" stroke="#15151a" stroke-width="0.95"/>
<ellipse cx="817.1" cy="499.8" rx="2.1" ry="1.4" fill="#e8e1a0" stroke="#15151a" stroke-width="0.95"/>
<ellipse cx="1010.7" cy="310.7" rx="15.3" ry="9.1" fill="url(#g12)"/><g clip-path="url(#c11)"><ellipse cx="1011.0" cy="313.7" rx="15.3" ry="9.1" fill="#a9b1aa" stroke="#15151a" stroke-width="0.7"/><path d="M996,300 L1002.4,300 L1002.4,322 L996,322Z" fill="#fff"/><path d="M1001.2,300.5v16.5" stroke="#e8d66a" stroke-width="1.6"/><path d="M1000.2,300.5v16.5" stroke="#15151a" stroke-width="0.5"/></g><ellipse cx="1010.7" cy="310.7" rx="15.3" ry="9.1" fill="none" stroke="#15151a" stroke-width="0.9"/>
<ellipse cx="1060.9" cy="340.0" rx="15.3" ry="9.1" fill="url(#g14)"/><g clip-path="url(#c13)"><ellipse cx="1061.2" cy="343.0" rx="15.3" ry="9.1" fill="#a9b1aa" stroke="#15151a" stroke-width="0.7"/><path d="M1064.3,347.9 L1075.0,341.5 L1082,346 L1070,354 Z" fill="#fff" stroke="#15151a" stroke-width="0.6"/></g><ellipse cx="1060.9" cy="340.0" rx="15.3" ry="9.1" fill="none" stroke="#15151a" stroke-width="0.9"/>
<ellipse cx="973.0" cy="332.5" rx="6.6" ry="4.0" fill="url(#g16)"/><g clip-path="url(#c15)"><ellipse cx="973.3" cy="334.7" rx="6.6" ry="4.0" fill="#ffffff" stroke="#15151a" stroke-width="0.7"/></g><ellipse cx="973.0" cy="332.5" rx="6.6" ry="4.0" fill="none" stroke="#15151a" stroke-width="0.9"/>
<ellipse cx="1023.0" cy="361.5" rx="6.6" ry="4.0" fill="url(#g18)"/><g clip-path="url(#c17)"><ellipse cx="1023.3" cy="363.7" rx="6.6" ry="4.0" fill="#a9b1aa" stroke="#15151a" stroke-width="0.7"/></g><ellipse cx="1023.0" cy="361.5" rx="6.6" ry="4.0" fill="none" stroke="#15151a" stroke-width="0.9"/>
<path d="M901.4,370.6 Q897.9,368.2 901.5,366.1 L917.7,356.8 Q921.3,354.7 924.8,357.0 L929.6,360.4 Q933.1,362.8 929.5,364.9 L913.3,374.2 Q909.7,376.3 906.2,374.0 Z" fill="url(#g20)"/><g clip-path="url(#c19)"><path d="M901.4,370.6 Q897.9,368.2 901.5,366.1 L917.7,356.8 Q921.3,354.7 924.8,357.0 L929.6,360.4 Q933.1,362.8 929.5,364.9 L913.3,374.2 Q909.7,376.3 906.2,374.0 Z" transform="translate(0.9,2.5)" fill="#fff" stroke="#15151a" stroke-width="0.7"/></g><path d="M901.4,370.6 Q897.9,368.2 901.5,366.1 L917.7,356.8 Q921.3,354.7 924.8,357.0 L929.6,360.4 Q933.1,362.8 929.5,364.9 L913.3,374.2 Q909.7,376.3 906.2,374.0 Z" fill="none" stroke="#15151a" stroke-width="0.9"/>
<ellipse cx="931.3" cy="355.9" rx="2.5" ry="1.6" fill="#e8e1a0" stroke="#15151a" stroke-width="0.95"/>
<ellipse cx="899.9" cy="374.4" rx="2.5" ry="1.6" fill="#e8e1a0" stroke="#15151a" stroke-width="0.95"/>
<path d="M831.8,411.1 Q828.3,408.7 831.9,406.6 L860.9,389.9 Q864.5,387.8 868.0,390.1 L872.8,393.5 Q876.3,395.9 872.7,398.0 L843.7,414.7 Q840.1,416.8 836.6,414.5 Z" fill="url(#g22)"/><g clip-path="url(#c21)"><path d="M831.8,411.1 Q828.3,408.7 831.9,406.6 L860.9,389.9 Q864.5,387.8 868.0,390.1 L872.8,393.5 Q876.3,395.9 872.7,398.0 L843.7,414.7 Q840.1,416.8 836.6,414.5 Z" transform="translate(0.9,2.5)" fill="#fff" stroke="#15151a" stroke-width="0.7"/></g><path d="M831.8,411.1 Q828.3,408.7 831.9,406.6 L860.9,389.9 Q864.5,387.8 868.0,390.1 L872.8,393.5 Q876.3,395.9 872.7,398.0 L843.7,414.7 Q840.1,416.8 836.6,414.5 Z" fill="none" stroke="#15151a" stroke-width="0.9"/>
<ellipse cx="874.2" cy="389.4" rx="2.5" ry="1.6" fill="#e8e1a0" stroke="#15151a" stroke-width="0.95"/>
<ellipse cx="831.9" cy="413.7" rx="2.5" ry="1.6" fill="#e8e1a0" stroke="#15151a" stroke-width="0.95"/>
<path d="M882.5,439.8 Q878.9,437.6 882.5,435.5 L949.1,396.9 Q952.7,394.8 956.3,396.9 L961.5,400.2 Q965.1,402.4 961.5,404.5 L894.9,443.1 Q891.3,445.2 887.7,443.1 Z" fill="url(#g24)"/><g clip-path="url(#c23)"><path d="M882.5,439.8 Q878.9,437.6 882.5,435.5 L949.1,396.9 Q952.7,394.8 956.3,396.9 L961.5,400.2 Q965.1,402.4 961.5,404.5 L894.9,443.1 Q891.3,445.2 887.7,443.1 Z" transform="translate(0.9,2.5)" fill="#fff" stroke="#15151a" stroke-width="0.7"/></g><path d="M882.5,439.8 Q878.9,437.6 882.5,435.5 L949.1,396.9 Q952.7,394.8 956.3,396.9 L961.5,400.2 Q965.1,402.4 961.5,404.5 L894.9,443.1 Q891.3,445.2 887.7,443.1 Z" fill="none" stroke="#15151a" stroke-width="0.9"/>
<ellipse cx="962.4" cy="396.4" rx="2.5" ry="1.6" fill="#e8e1a0" stroke="#15151a" stroke-width="0.95"/>
<ellipse cx="882.4" cy="442.9" rx="2.5" ry="1.6" fill="#e8e1a0" stroke="#15151a" stroke-width="0.95"/>
<polygon points="689.7,459.4 805.9,524.4 805.9,533.9 803.9,533.9 686.0,467.8 686.0,466.0 686.6,461.5" fill="url(#g25)" stroke="#15151a" stroke-width="0.95" stroke-linejoin="round" />
<polygon points="685.6,467.6 803.6,534.2 803.6,547.2 756.4,524.0 699.3,562.4 685.6,552.6" fill="#8aa7a0" stroke="#15151a" stroke-width="0.9" stroke-linejoin="round" />
<polygon points="805.9,524.4 1116.1,346.7 1120.6,345.8 1123.8,350.6 1121.0,354.5 808.2,534.8 805.9,533.9" fill="url(#g26)" stroke="#15151a" stroke-width="0.95" stroke-linejoin="round" />
<polygon points="808.2,534.8 1121.0,354.5 1123.8,351.5 1123.8,367.8 806.4,551.4 808.2,549.0" fill="#565fa9" stroke="#15151a" stroke-width="0.9" stroke-linejoin="round" />
<polygon points="808.4,547.4 1123.8,364.9 1123.8,367.8 808.6,550.4" fill="#6e6ec4" stroke="#15151a" stroke-width="0.7" stroke-linejoin="round" />
<polygon points="806.0,534.6 808.4,534.8 808.4,549.4 806.2,551.6 798.8,548.0 800.4,546.6 805.8,548.4" fill="#efe465" stroke="#15151a" stroke-width="0.95" stroke-linejoin="round" />
<polygon points="803.8,535.5 805.6,535.5 805.6,545.5 803.8,545.5" fill="#8c8cc4" stroke="none" stroke-width="0" stroke-linejoin="round" />
<polygon points="1117.0,345.8 1120.4,345.2 1122.0,347.6 1120.6,349.2" fill="#4e78c8" stroke="#15151a" stroke-width="0.5" stroke-linejoin="round" />
<polygon points="1121.0,349.0 1123.2,349.6 1123.4,354.2 1121.2,354.4" fill="#86c878" stroke="#15151a" stroke-width="0.4" stroke-linejoin="round" />
<path d="M651.4,478.8 L678.5,463.4 L679.6,466.6 L654.8,480.2 L654.8,566.2 L659.7,570.8 L664.7,576.3 L676.4,576.4 L699.2,562.4 L699.2,564.6 L676.6,578.4 L664.6,578.4 C659,577.4 652.6,572.6 651.4,567.4 Z" fill="#f0e35e" stroke="#15151a" stroke-width="0.95" stroke-linejoin="round"/>
<polygon points="654.8,480.2 679.6,466.6 679.6,549.6 654.8,566.0" fill="#565fa9" stroke="#15151a" stroke-width="0.95" stroke-linejoin="round" />
<path d="M663.6,493.4 Q663.8,490.2 667,488.9 Q670.4,488.2 670.6,491.2 L670.6,542.4 Q670.2,545.2 667.2,547.2 Q663.8,548.6 663.6,545.6 Z" fill="#f0e35e" stroke="#15151a" stroke-width="0.9"/>
<path d="M664.4,494.6 Q664.6,491.6 667.6,490.6 L667.6,546.2 Q664.6,547.6 664.4,545.2 Z" fill="#fff"/>
<path d="M667.6,490.4 L667.6,546.4" stroke="#15151a" stroke-width="0.4"/>
<polygon points="679.6,467.4 685.6,467.4 685.6,552.4 682.6,556.2 679.6,549.6" fill="url(#g27)" stroke="#15151a" stroke-width="0.95" stroke-linejoin="round" />
<polygon points="679.6,466.6 680.2,465.2 685.6,465.4 685.6,467.6" fill="#8fce9c" stroke="#15151a" stroke-width="0.4" stroke-linejoin="round" />
<polygon points="654.8,566.0 679.6,549.6 683.4,556.0 659.6,570.6" fill="url(#g28)" stroke="#15151a" stroke-width="0.5" stroke-linejoin="round" />
<polygon points="659.6,570.6 683.4,556.0 685.6,552.8 699.2,562.4 676.4,576.4 664.6,576.4" fill="#b6c1a4" stroke="#15151a" stroke-width="0.95" stroke-linejoin="round" />
<polygon points="676.6,578.2 699.2,564.4 699.2,562.6 676.4,576.6" fill="#8a8cd0" stroke="#15151a" stroke-width="0.4" stroke-linejoin="round" />
<ellipse cx="682.6" cy="554.6" rx="1.8" ry="1.6" fill="#fff"/>
<polyline points="805.9,533.6 762.5,509.6" fill="none" stroke="#14a656" stroke-width="2.6" stroke-linejoin="round" stroke-linecap="round" />
<polygon points="758.2,507.2 768.6,507.0 764.2,515.2" fill="#0f8a48" stroke="#0f8a48" stroke-width="0.5" stroke-linejoin="round" />
<polyline points="805.9,533.6 846.0,511.4" fill="none" stroke="#d9706e" stroke-width="2.6" stroke-linejoin="round" stroke-linecap="round" />
<polygon points="853.2,507.2 842.6,507.0 846.8,515.4" fill="#c96664" stroke="#c96664" stroke-width="0.5" stroke-linejoin="round" />
<polyline points="805.9,533.6 805.9,490.0" fill="none" stroke="#0c62c4" stroke-width="3.2" stroke-linejoin="round" stroke-linecap="round" />
<polygon points="805.9,479.4 801.6,490.4 810.2,490.4" fill="#0c6cd8" stroke="#0c6cd8" stroke-width="0.5" stroke-linejoin="round" />
<polyline points="801.4,466.2 810.0,466.2 801.4,476.8 810.0,476.8" fill="none" stroke="#4aa0e6" stroke-width="1.3" stroke-linejoin="round" stroke-linecap="round" />
<polyline points="747.0,497.6 751.4,503.0 755.8,497.6" fill="none" stroke="#5fd08a" stroke-width="0.9" stroke-linejoin="round" stroke-linecap="round" />
<polyline points="751.4,503.0 751.4,508.0" fill="none" stroke="#5fd08a" stroke-width="0.9" stroke-linejoin="round" stroke-linecap="round" />
<polyline points="855.6,497.4 865.0,509.6" fill="none" stroke="#f0a0a0" stroke-width="0.9" stroke-linejoin="round" stroke-linecap="round" />
<polyline points="865.0,497.4 855.6,509.6" fill="none" stroke="#f0a0a0" stroke-width="0.9" stroke-linejoin="round" stroke-linecap="round" />
<circle cx="1209.4" cy="55.2" r="25.6" fill="#fbfbfb" stroke="#dcdcdc" stroke-width="0.8"/>
<polygon points="1207.5,33.1 1211.3,33.1 1209.4,36.3" fill="#b2b2b2"/>
<polygon points="1207.5,77.3 1211.3,77.3 1209.4,74.1" fill="#b2b2b2"/>
<polygon points="1187.3,53.3 1187.3,57.1 1190.5,55.2" fill="#b2b2b2"/>
<polygon points="1231.5,53.3 1231.5,57.1 1228.3,55.2" fill="#b2b2b2"/>
<polygon points="1195.9,38.6 1195.9,42.0 1193.0,40.3" fill="#b2b2b2"/>
<polygon points="1222.9,38.6 1222.9,42.0 1225.8,40.3" fill="#b2b2b2"/>
<polygon points="1195.9,68.4 1195.9,71.8 1193.0,70.1" fill="#b2b2b2"/>
<polygon points="1222.9,68.4 1222.9,71.8 1225.8,70.1" fill="#b2b2b2"/>
<polyline points="537.5,576.0 537.5,624.4" fill="none" stroke="#58a0f4" stroke-width="1.0" stroke-linejoin="round" stroke-linecap="round" />
<polyline points="533.8,610.0 565.8,592.0" fill="none" stroke="#f4a8a8" stroke-width="0.8" stroke-linejoin="round" stroke-linecap="round" />
<polyline points="533.8,606.0 551.8,616.0" fill="none" stroke="#58d090" stroke-width="0.9" stroke-linejoin="round" stroke-linecap="round" />
<rect x="534" y="604.5" width="7.6" height="8" fill="none" stroke="#3a3a3a" stroke-width="1"/>
</svg>
</body></html>
